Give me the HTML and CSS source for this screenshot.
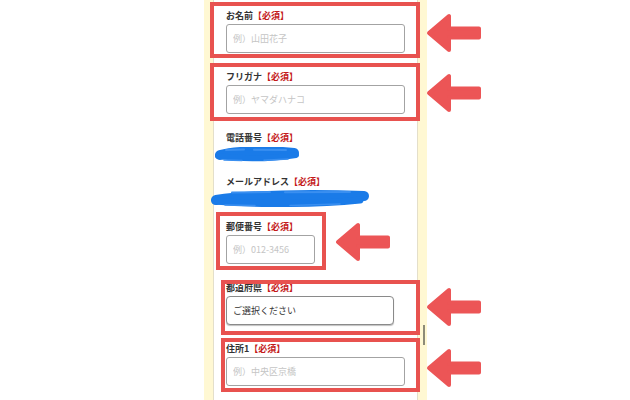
FILE: index.html
```html
<!DOCTYPE html>
<html lang="ja">
<head>
    <meta charset="UTF-8">
    <meta name="viewport" content="width=device-width, initial-scale=1.0">
    <title>お問い合わせフォーム</title>
    <link rel="stylesheet" href="styles.css">
</head>
<body>
    <div class="panel">
        <div class="card">
            <div class="field">
                <label class="label">お名前<span class="req">【必須】</span></label>
                <input class="text-input" type="text" placeholder="例）山田花子">
            </div>

            <div class="field">
                <label class="label">フリガナ<span class="req">【必須】</span></label>
                <input class="text-input" type="text" placeholder="例）ヤマダハナコ">
            </div>

            <div class="field field-tel">
                <label class="label">電話番号<span class="req">【必須】</span></label>
                <svg class="scribble scribble-tel" width="86" height="15" viewBox="0 0 86 15">
                    <path d="M6 8 C22 4, 52 3, 80 6" stroke="#1a7be8" stroke-width="10" stroke-linecap="round" fill="none"/>
                    <path d="M4 9 C25 12, 55 12, 82 8" stroke="#1a7be8" stroke-width="6" stroke-linecap="round" fill="none"/>
                    <path d="M12 3 L30 2.5 M40 2.8 L72 3" stroke="#3a8ff0" stroke-width="2" stroke-linecap="round" fill="none"/>
                    <path d="M10 13 L28 13.5 M50 13.2 L74 12" stroke="#3a8ff0" stroke-width="1.5" stroke-linecap="round" fill="none"/>
                </svg>
            </div>

            <div class="field field-mail">
                <label class="label">メールアドレス<span class="req">【必須】</span></label>
                <svg class="scribble scribble-mail" width="160" height="17" viewBox="0 0 160 17">
                    <path d="M6 10 C40 5, 100 4, 154 6" stroke="#1a7be8" stroke-width="10" stroke-linecap="round" fill="none"/>
                    <path d="M5 11 C50 15, 110 14, 150 10" stroke="#1a7be8" stroke-width="7" stroke-linecap="round" fill="none"/>
                    <path d="M22 2.5 L60 2 M75 2.3 L140 2" stroke="#3a8ff0" stroke-width="2" stroke-linecap="round" fill="none"/>
                    <path d="M15 15 L45 15.5 M80 15.4 L130 14" stroke="#3a8ff0" stroke-width="1.5" stroke-linecap="round" fill="none"/>
                </svg>
            </div>

            <div class="field">
                <label class="label">郵便番号<span class="req">【必須】</span></label>
                <input class="text-input text-input-short" type="text" placeholder="例）012-3456">
            </div>

            <div class="field">
                <label class="label">都道府県<span class="req">【必須】</span></label>
                <select class="select-input">
                    <option>ご選択ください</option>
                </select>
            </div>

            <div class="field">
                <label class="label">住所1<span class="req">【必須】</span></label>
                <input class="text-input" type="text" placeholder="例）中央区京橋">
            </div>
        </div>
    </div>

    <!-- annotation overlay -->
    <div class="note-box box-name"></div>
    <div class="note-box box-kana"></div>
    <div class="note-box box-zip"></div>
    <div class="note-box box-pref"></div>
    <div class="note-box box-addr"></div>

    <svg class="arrow arrow-name" width="56" height="40" viewBox="0 0 56 40"><path d="M3 20 L23 3 L23 15.5 L53 15.5 L53 24.5 L23 24.5 L23 37 Z"/></svg>
    <svg class="arrow arrow-kana" width="56" height="40" viewBox="0 0 56 40"><path d="M3 20 L23 3 L23 15.5 L53 15.5 L53 24.5 L23 24.5 L23 37 Z"/></svg>
    <svg class="arrow arrow-zip" width="56" height="40" viewBox="0 0 56 40"><path d="M3 20 L23 3 L23 15.5 L53 15.5 L53 24.5 L23 24.5 L23 37 Z"/></svg>
    <svg class="arrow arrow-pref" width="56" height="40" viewBox="0 0 56 40"><path d="M3 20 L23 3 L23 15.5 L53 15.5 L53 24.5 L23 24.5 L23 37 Z"/></svg>
    <svg class="arrow arrow-addr" width="56" height="40" viewBox="0 0 56 40"><path d="M3 20 L23 3 L23 15.5 L53 15.5 L53 24.5 L23 24.5 L23 37 Z"/></svg>

    <div class="scroll-thumb"></div>
</body>
</html>
```

FILE: styles.css
```css
* {
    margin: 0;
    padding: 0;
    box-sizing: border-box;
}

body {
    font-family: "Noto Sans CJK JP", "Noto Sans", sans-serif;
    background: white;
    position: relative;
    height: 400px;
    overflow: hidden;
}

.panel {
    width: 223px;
    height: 400px;
    margin-left: 204px;
    padding: 0 9px;
    background: #fff8d3;
}

.card {
    height: 100%;
    background: white;
    border-left: 1px solid #e4dfca;
    border-right: 1px solid #e4dfca;
    padding: 9px 12px 0;
}

.field {
    display: flex;
    flex-direction: column;
    margin-bottom: 17px;
}

.field-tel {
    height: 44px;
    margin-bottom: 0;
}

.field-mail {
    height: 45px;
    margin-bottom: 0;
}

.label {
    font-size: 9px;
    line-height: 13px;
    height: 13px;
    margin-bottom: 2px;
    font-weight: bold;
    color: #333;
}

.req {
    color: #c41a1a;
}

.text-input {
    width: 179px;
    height: 29px;
    border: 1px solid #a3a3a3;
    border-radius: 3px;
    padding: 0 6px;
    font-family: inherit;
    font-size: 9px;
    color: #333;
    outline: none;
}

.text-input::placeholder {
    color: #c5c5c5;
}

.text-input-short {
    width: 89px;
}

.select-input {
    appearance: none;
    -webkit-appearance: none;
    width: 168px;
    height: 29px;
    border: 1px solid #8a8a8a;
    border-radius: 4px;
    padding: 0 6px;
    background: white;
    box-shadow: 0 1px 1px rgba(0, 0, 0, 0.25);
    font-family: inherit;
    font-size: 9px;
    color: #333;
}

.scribble {
    display: block;
}

.scribble-tel {
    margin: 1px 0 0 -12px;
}

.scribble-mail {
    margin: 0 0 0 -16px;
}

/* annotations */
.note-box {
    position: absolute;
    border: 4px solid #e8524f;
}

.box-name { left: 210px; top: 2px; width: 210px; height: 56px; }
.box-kana { left: 210px; top: 63px; width: 210px; height: 58px; }
.box-zip { left: 216px; top: 212px; width: 110px; height: 58px; }
.box-pref { left: 221px; top: 280px; width: 199px; height: 55px; }
.box-addr { left: 221px; top: 338px; width: 199px; height: 54px; }

.arrow {
    position: absolute;
}

.arrow path {
    fill: #ec5556;
    stroke: #ec5556;
    stroke-width: 4;
    stroke-linejoin: round;
}

.arrow-name { left: 426px; top: 13px; }
.arrow-kana { left: 426px; top: 73px; }
.arrow-zip { left: 335px; top: 222px; }
.arrow-pref { left: 426px; top: 287px; }
.arrow-addr { left: 426px; top: 348px; }

.scroll-thumb {
    position: absolute;
    left: 423px;
    top: 325px;
    width: 2px;
    height: 20px;
    background: #8d8b78;
}
```
